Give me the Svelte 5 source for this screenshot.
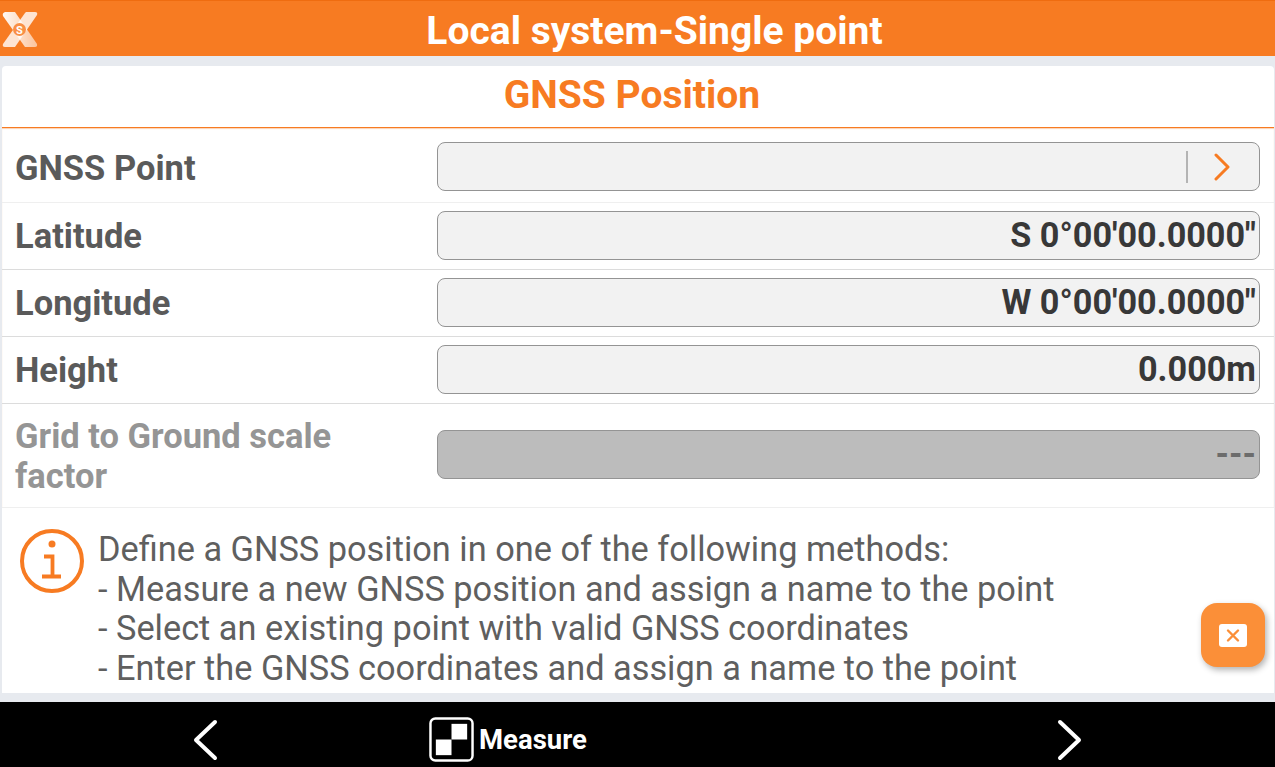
<script lang="ts">
  const rows = [
    { label: 'GNSS Point', value: '', picker: true },
    { label: 'Latitude', value: 'S 0°00\'00.0000"' },
    { label: 'Longitude', value: 'W 0°00\'00.0000"' },
    { label: 'Height', value: '0.000m' },
  ];
  const hints = [
    'Define a GNSS position in one of the following methods:',
    '- Measure a new GNSS position and assign a name to the point',
    '- Select an existing point with valid GNSS coordinates',
    '- Enter the GNSS coordinates and assign a name to the point',
  ];
</script>

<div class="screen">
  <header class="topbar">
    <svg class="logo" viewBox="0 0 36 36" width="36" height="36">
      <defs>
        <linearGradient id="band" x1="0" y1="0" x2="1" y2="0">
          <stop offset="0" stop-color="#fff" stop-opacity="0.95" />
          <stop offset="1" stop-color="#fff" stop-opacity="0.55" />
        </linearGradient>
      </defs>
      <path d="M3 1h10l22 32q.6 3-2 3H23L1 5q-1-3 2-4z" fill="url(#band)" />
      <path d="M24 1h9q3 0 2 3L13 36H3q-3 0-2-3L23 2z" fill="#fff" opacity="0.8" />
      <circle cx="17.500" cy="18.500" r="6.500" fill="#f98f45" />
      <text x="17.500" y="22.500" class="logo-s">S</text>
    </svg>
    <h1>Local system-Single point</h1>
  </header>

  <main class="card">
    <h2>GNSS Position</h2>
    <div class="form">
      {#each rows as row}
        <div class="row">
          <span class="label">{row.label}</span>
          <div class="field">
            {#if row.picker}
              <span class="sep"></span>
              <svg class="chev" viewBox="0 0 16 28" width="16" height="28">
                <path d="M2 2l12 12L2 26" fill="none" stroke="#f77b22" stroke-width="3" stroke-linecap="round" stroke-linejoin="round" />
              </svg>
            {:else}
              {row.value}
            {/if}
          </div>
        </div>
      {/each}
      <div class="row disabled">
        <span class="label">Grid to Ground scale factor</span>
        <div class="field">---</div>
      </div>
    </div>

    <section class="info">
      <svg class="info-icon" viewBox="0 0 64 64" width="64" height="64">
        <circle cx="32" cy="32" r="30" fill="none" stroke="#f77b22" stroke-width="4" />
        <circle cx="32" cy="15" r="3.500" fill="#f77b22" />
        <path d="M24 27.500h8.500v20M22 47.500h19" fill="none" stroke="#f77b22" stroke-width="3.800" />
      </svg>
      <div class="hints">
        {#each hints as line}
          <div>{line}</div>
        {/each}
      </div>
    </section>

    <button class="fab" aria-label="Close">
      <svg viewBox="0 0 28 23" width="28" height="23">
        <rect width="28" height="23" rx="3" fill="#fff" />
        <path d="M9 6.500l10 10M19 6.500l-10 10" stroke="#fb8f38" stroke-width="2.400" stroke-linecap="round" />
      </svg>
    </button>
  </main>

  <footer class="bottombar">
    <svg class="nav back" viewBox="0 0 26 42" width="26" height="42">
      <path d="M23 3L4 21l19 18" fill="none" stroke="#fff" stroke-width="4" stroke-linecap="round" stroke-linejoin="round" />
    </svg>
    <div class="measure">
      <svg viewBox="0 0 46 46" width="45" height="45">
        <rect x="1.500" y="1.500" width="43" height="43" rx="5" fill="#000" stroke="#fff" stroke-width="2.500" />
        <rect x="23" y="7" width="16" height="16" fill="#fff" />
        <rect x="7" y="23" width="16" height="16" fill="#fff" />
      </svg>
      <span>Measure</span>
    </div>
    <svg class="nav next" viewBox="0 0 26 42" width="26" height="42">
      <path d="M3 3l19 18L3 39" fill="none" stroke="#fff" stroke-width="4" stroke-linecap="round" stroke-linejoin="round" />
    </svg>
  </footer>
</div>

<style>
  :global(body) {
    margin: 0;
    background: #e7eaef;
    font-family: Roboto, "Liberation Sans", sans-serif;
  }

  .screen {
    width: 1275px;
    height: 767px;
    display: flex;
    flex-direction: column;
    overflow: hidden;
  }

  .topbar {
    height: 56px;
    flex: none;
    box-sizing: border-box;
    border-top: 1px solid #ef6c10;
    background: #f77b22;
    display: flex;
    align-items: center;
    justify-content: center;
    position: relative;
  }

  .logo {
    position: absolute;
    left: 2px;
    top: 10px;
  }

  .logo-s {
    font-size: 11px;
    font-weight: 700;
    fill: #fff;
    text-anchor: middle;
  }

  h1 {
    margin: 4px 0 0 34px;
    color: #fff;
    font-size: 39px;
    font-weight: 700;
    line-height: 56px;
  }

  .card {
    flex: none;
    height: 627px;
    margin: 10px 1px 0 2px;
    background: #fff;
    border-radius: 4px 4px 0 0;
    position: relative;
    box-sizing: border-box;
    overflow: visible;
  }

  h2 {
    margin: 0 0 0 -12px;
    height: 62px;
    box-sizing: border-box;
    color: #f77b22;
    font-size: 39px;
    font-weight: 700;
    line-height: 58px;
    text-align: center;
  }

  .form {
    border-top: 1px solid #f77b22;
    box-shadow: inset 0 1px 1px rgba(247, 123, 34, 0.35);
    margin-top: -1px;
  }

  .row {
    display: grid;
    grid-template-columns: 422px 1fr;
    align-items: center;
    height: 67px;
    box-sizing: border-box;
    border-bottom: 1px solid #dcdcdc;
    padding: 0 14px 1px 13px;
  }

  .row:first-child {
    height: 75px;
    padding-top: 4px;
    border-bottom-color: #efefef;
  }

  .row:first-child .label {
    margin-top: 2px;
  }

  .label {
    color: #5a5a5a;
    font-size: 34.500px;
    font-weight: 700;
  }

  .field {
    height: 49px;
    box-sizing: border-box;
    border: 1px solid #949494;
    border-radius: 8px;
    background: #f2f2f2;
    color: #383838;
    font-size: 34.200px;
    font-weight: 700;
    line-height: 47px;
    padding-right: 3px;
    display: flex;
    align-items: center;
    justify-content: flex-end;
  }

  .sep {
    width: 2px;
    height: 32px;
    background: #b4b4b4;
    margin-right: 26px;
  }

  .chev {
    margin-right: 26px;
  }

  .row.disabled {
    height: 104px;
    padding-bottom: 2px;
    border-bottom-color: #efefef;
  }

  .disabled .label {
    color: #959595;
    line-height: 40px;
    width: 340px;
    margin-top: 3px;
  }

  .disabled .field {
    background: #bcbcbc;
    color: #6c6c6c;
  }

  .info {
    display: flex;
    gap: 14px;
    padding: 21px 0 0 18px;
  }

  .info-icon {
    flex: none;
  }

  .hints {
    margin-top: 1px;
    color: #5f5f5f;
    font-size: 34.350px;
    line-height: 39.600px;
  }

  .fab {
    position: absolute;
    right: 9px;
    top: 537px;
    width: 64px;
    height: 64px;
    border: none;
    border-radius: 16px;
    padding: 0;
    background: #fb8f38;
    box-shadow: 2px 3px 6px rgba(0, 0, 0, 0.3);
    display: flex;
    align-items: center;
    justify-content: center;
  }

  .bottombar {
    flex: none;
    height: 65px;
    margin-top: 9px;
    box-sizing: border-box;
    padding: 10px 192px 0;
    background: #000;
    display: flex;
    align-items: center;
  }

  .measure {
    margin-left: 211px;
    display: flex;
    align-items: center;
    gap: 5px;
    color: #fff;
    font-size: 27.500px;
    font-weight: 700;
  }

  .next {
    margin-left: auto;
  }
</style>
